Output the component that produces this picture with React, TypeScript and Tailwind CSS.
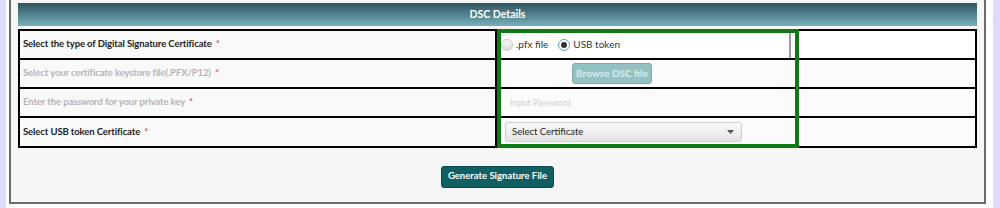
import React from 'react';

const Req = () => <span className="text-[#e06060] ml-1">*</span>;

export default function App() {
  return (
    <div className="w-[1000px] h-[208px] bg-white flex font-['Lato',sans-serif] overflow-hidden">
      <div className="w-[6px] bg-[#dcdcfa]" />
      <div className="w-[3px]" />
      <div className="w-[977px] h-[204px] bg-[#f6f6f6] border-l-2 border-r-2 border-b-2 border-[#6b6b6b] pl-[7px] pr-[7px] pt-[3px] flex flex-col">
        <div className="h-[23px] bg-gradient-to-b from-[#2f5661] to-[#76b0bb] flex items-center justify-center text-white font-bold text-[10.5px]">
          DSC Details
        </div>

        <div className="relative mt-[3px] border-2 border-black bg-[#f9f9f9]">
          {/* row 1 */}
          <div className="flex h-[29px] border-b-2 border-black">
            <div className="w-[477px] flex items-center pl-[3px] text-[9.5px] tracking-[-0.1px] font-bold text-[#222] border-r-2 border-black">
              Select the type of Digital Signature Certificate<Req />
            </div>
            <div className="flex-1 flex bg-white">
              <div className="w-[294px] h-full border-r-2 border-[#9a9a9a] flex items-center pl-[4px] gap-[3px] text-[10px] text-[#333]">
                <span className="w-[12px] h-[12px] rounded-full border border-[#c8c8c8] bg-gradient-to-b from-[#fafafa] to-[#dedede]" />
                <span className="mr-[7px]">.pfx file</span>
                <span className="w-[12px] h-[12px] rounded-full border border-[#5aa3c8] bg-white flex items-center justify-center">
                  <span className="w-[6px] h-[6px] rounded-full bg-[#333]" />
                </span>
                <span>USB token</span>
              </div>
            </div>
          </div>
          {/* row 2 */}
          <div className="flex h-[29px] border-b-2 border-black">
            <div className="w-[477px] flex items-center pl-[3px] text-[9.5px] tracking-[-0.1px] font-bold text-[#b4b4b4] border-r-2 border-black">
              Select your certificate keystore file(.PFX/P12)<Req />
            </div>
            <div className="flex-1 flex items-center pl-[75px] bg-[#fbfbfb]">
              <button className="w-[80px] h-[21px] rounded-[3px] bg-[#93c2c2] border border-[#7aabab] text-[#dcecec] text-[10px] font-bold">
                Browse DSC file
              </button>
            </div>
          </div>
          {/* row 3 */}
          <div className="flex h-[29px] border-b-2 border-black">
            <div className="w-[477px] flex items-center pl-[3px] text-[9.5px] tracking-[-0.1px] font-bold text-[#b4b4b4] border-r-2 border-black">
              Enter the password for your private key<Req />
            </div>
            <div className="flex-1 flex items-center pl-[13px] bg-[#fbfbfb] text-[9px] text-[#d0d0d0]">
              Input Password
            </div>
          </div>
          {/* row 4 */}
          <div className="flex h-[28px]">
            <div className="w-[477px] flex items-center pl-[3px] text-[9.5px] tracking-[-0.1px] font-bold text-[#222] border-r-2 border-black">
              Select USB token Certificate<Req />
            </div>
            <div className="flex-1 flex items-center pl-[8px] bg-[#fbfbfb]">
              <div className="w-[237px] h-[20px] rounded-[3px] border border-[#d0d0d0] bg-gradient-to-b from-[#fafafa] to-[#e4e4e4] flex items-center justify-between pl-[6px] pr-[7px] text-[9.5px] text-[#222]">
                <span>Select Certificate</span>
                <svg width="7" height="4" viewBox="0 0 7 4"><path d="M0 0h7L3.5 4z" fill="#555" /></svg>
              </div>
            </div>
          </div>

          <div className="absolute left-[477px] -top-[2px] w-[302px] h-[119px] border-[4px] border-[#0f7a12] pointer-events-none" />
        </div>

        <div className="flex-1 flex items-center justify-center pt-[3px]">
          <button className="h-[22px] px-[6px] rounded-[3px] bg-[#0f5f63] border border-[#0a4a4d] text-white text-[9.5px] font-bold">
            Generate Signature File
          </button>
        </div>
      </div>
      <div className="w-[7px]" />
      <div className="flex-1 bg-[#dcdcfa]" />
    </div>
  );
}
